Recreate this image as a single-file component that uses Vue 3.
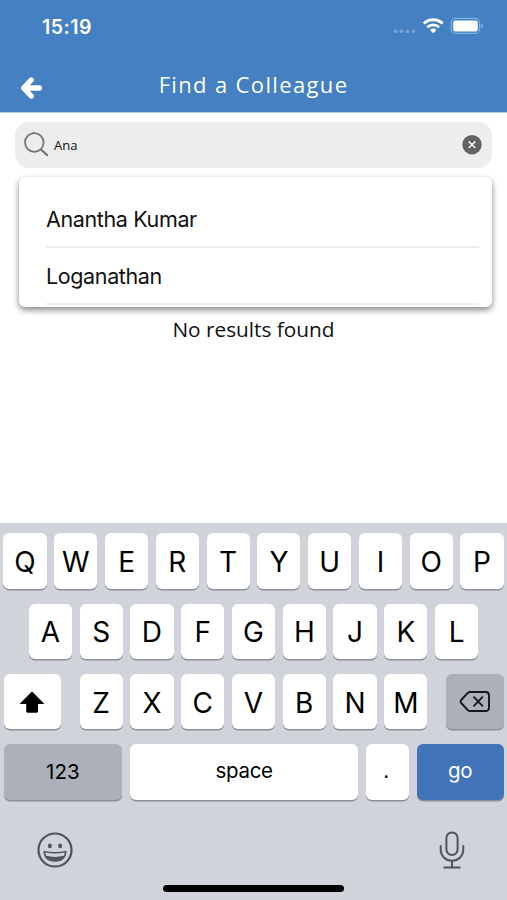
<script setup>
const letterRows = [
  ['Q', 'W', 'E', 'R', 'T', 'Y', 'U', 'I', 'O', 'P'],
  ['A', 'S', 'D', 'F', 'G', 'H', 'J', 'K', 'L'],
]
const lastRow = ['Z', 'X', 'C', 'V', 'B', 'N', 'M']
const suggestions = ['Anantha Kumar', 'Loganathan']
</script>

<template>
  <div class="screen">
    <header class="header">
      <div class="status">
        <span class="time">15:19</span>
        <svg class="status-icons" width="92" height="20" viewBox="0 0 92 20">
          <g fill="#fff" opacity=".26">
            <circle cx="3.500" cy="15.200" r="1.900" />
            <circle cx="9.500" cy="15.200" r="1.900" />
            <circle cx="15.500" cy="15.200" r="1.900" />
            <circle cx="21.500" cy="15.200" r="1.900" />
          </g>
          <g fill="none" stroke="#fff" stroke-width="2.900">
            <path d="M31.800 7.500a13.600 13.600 0 0 1 18.800 0" />
            <path d="M35.300 11.300a8.400 8.400 0 0 1 11.800 0" />
          </g>
          <path d="M38 13.900a4.600 4.600 0 0 1 6.400 0L41.200 17.200z" fill="#fff" />
          <rect x="59.200" y="2.400" width="28.400" height="15" rx="4.500" fill="none" stroke="#7db4df" stroke-width="1.200" />
          <rect x="61.200" y="4.600" width="24.600" height="10.800" rx="2.500" fill="#fff" />
          <path d="M89.300 7.900c2 .6 2 3.800 0 4.400z" fill="#8dbde5" />
        </svg>
      </div>
      <div class="titlebar">
        <svg class="back" width="24" height="24" viewBox="0 0 24 24" fill="none" stroke="#fff" stroke-width="5.400" stroke-linejoin="round" stroke-linecap="round">
          <path d="M12.200 4L4.600 12l7.600 8" />
          <path d="M5.500 12h14.800" />
        </svg>
        <h1 class="title">Find a Colleague</h1>
      </div>
    </header>

    <main class="content">
      <div class="search">
        <svg width="26" height="26" viewBox="0 0 26 26" fill="none" stroke="#707070">
          <circle cx="10.300" cy="10.500" r="9.300" stroke-width="1.700" />
          <path d="M17 17.400l6.800 6.400" stroke-width="2.100" />
        </svg>
        <span class="query">Ana</span>
        <svg width="20" height="20" viewBox="0 0 20 20">
          <circle cx="10" cy="9.700" r="9.700" fill="#626262" />
          <path d="M6.700 6.400l6.600 6.600M13.300 6.400l-6.600 6.600" stroke="#eee" stroke-width="1.700" />
        </svg>
      </div>
      <ul class="suggestions">
        <li v-for="name in suggestions" :key="name"><span>{{ name }}</span></li>
      </ul>
      <p class="empty"><span>No results found</span></p>
    </main>

    <section class="keyboard">
      <div v-for="(row, i) in letterRows" :key="i" class="row">
        <div v-for="k in row" :key="k" class="key">{{ k }}</div>
      </div>
      <div class="row spread">
        <div class="key shift">
          <svg width="26" height="24" viewBox="0 0 26 24">
            <path d="M13 1.500L24.800 13.200q.5.800-.4.800H19v7.300q0 1.400-1.400 1.400H8.600q-1.400 0-1.400-1.400V14H1.600q-.9 0-.4-.8z" fill="#000" />
          </svg>
        </div>
        <div class="group">
          <div v-for="k in lastRow" :key="k" class="key">{{ k }}</div>
        </div>
        <div class="key muted delete">
          <svg width="32" height="24" viewBox="0 0 32 24" fill="none" stroke="#15171c" stroke-linecap="round" stroke-linejoin="round">
            <path d="M11 2h15.500q3.500 0 3.500 3.500v12q0 3.500-3.500 3.500H11q-1.300 0-2.200-.9L2.200 13q-1.200-1.500 0-3L8.800 2.900Q9.700 2 11 2z" stroke-width="1.900" />
            <path d="M15 7.200l8.400 8.600M23.400 7.200L15 15.800" stroke-width="1.900" />
          </svg>
        </div>
      </div>
      <div class="row actions">
        <div class="key word muted numbers">123</div>
        <div class="key word space">space</div>
        <div class="key word dot">.</div>
        <div class="key word go">go</div>
      </div>
      <div class="tools">
        <svg width="36" height="36" viewBox="0 0 36 36">
          <circle cx="18" cy="18" r="16.500" fill="none" stroke="#50535a" stroke-width="2.200" />
          <ellipse cx="12.900" cy="13.900" rx="2" ry="2.400" fill="#50535a" />
          <ellipse cx="23.100" cy="13.900" rx="2" ry="2.400" fill="#50535a" />
          <path d="M6.400 18.800q11.600 2.600 23.200 0-.5 11-11.600 11T6.400 18.800z" fill="#50535a" />
          <path d="M8.200 20.500q9.800 2 19.600 0l-.9 3.300q-8.900 2.200-17.800 0z" fill="#d0d3da" />
        </svg>
        <svg width="26" height="38" viewBox="0 0 26 38" fill="none" stroke="#50535a" stroke-width="2" stroke-linecap="round">
          <rect x="7.400" y="1.400" width="11.200" height="22.600" rx="5.600" />
          <path d="M1.700 15v3c0 7 4.800 11.700 11.300 11.700S24.300 25 24.300 18v-3M13 29.700v6M5.300 36.400h15.400" />
        </svg>
      </div>
      <div class="home"></div>
    </section>
  </div>
</template>

<style>
body {
  margin: 0;
}
</style>

<style scoped>
.screen {
  width: 507px;
  height: 900px;
  display: flex;
  flex-direction: column;
  overflow: hidden;
  background: #fff;
  color: #111;
  font-family: Inter, "Liberation Sans", sans-serif;
}
.header {
  box-sizing: border-box;
  height: 113px;
  background: #4580c2;
  border-bottom: 1px solid #b4cbea;
}
.status {
  display: flex;
  justify-content: space-between;
  padding: 16px 23px 0 42px;
  height: 40px;
  box-sizing: border-box;
}
.time {
  color: #fff;
  font-size: 19.500px;
  font-weight: 600;
  line-height: 22px;
  letter-spacing: 0.500px;
}
.titlebar {
  display: grid;
  grid-template-columns: 40px 1fr 40px;
  align-items: center;
  height: 72px;
}
.back {
  margin: 24px 0 0 19px;
}
.title {
  margin: 15px 0 0;
  text-align: center;
  color: #fff;
  font: 400 22px/30px "Open Sans", sans-serif;
  letter-spacing: 1.350px;
}
.content {
  flex: 1;
  padding: 9px 15px 0;
}
.search {
  display: flex;
  align-items: center;
  box-sizing: border-box;
  height: 46px;
  padding: 0 10px 0 9px;
  border-radius: 14px;
  background: #ededed;
}
.query {
  flex: 1;
  margin-left: 4px;
  font: 400 13px/18px "Open Sans", sans-serif;
}
.suggestions {
  box-sizing: border-box;
  height: 130px;
  margin: 9px 0 0 4px;
  padding: 14px 13px 0 27px;
  list-style: none;
  overflow: hidden;
  border-radius: 6px;
  background: #fff;
  box-shadow: 0 3px 6px rgba(0, 0, 0, 0.48);
}
.suggestions li {
  box-sizing: border-box;
  height: 57px;
  border-bottom: 2px solid #eee;
  font-size: 21.500px;
  line-height: 56px;
  letter-spacing: -0.370px;
}
.empty {
  margin: 7px 0 0;
  text-align: center;
  font: 400 20.800px/30px "Open Sans", sans-serif;
}
.keyboard {
  display: flex;
  flex-direction: column;
  gap: 15px;
  box-sizing: border-box;
  height: 377px;
  padding: 10.400px 3.500px 0;
  background: #d0d3da;
}
.row {
  display: flex;
  justify-content: center;
  gap: 7.600px;
}
.spread {
  justify-content: space-between;
}
.group {
  display: flex;
  gap: 7.600px;
}
.key {
  display: flex;
  align-items: center;
  justify-content: center;
  box-sizing: border-box;
  width: 43.200px;
  height: 55.300px;
  padding-top: 2px;
  flex: none;
  border-radius: 6px;
  background: #fff;
  box-shadow: 0 1.500px 0 #8e9095;
  color: #000;
  font-size: 28px;
}
.muted {
  background: #abb0bb;
}
.shift,
.delete {
  width: 57.500px;
  padding-top: 0;
}
.word {
  padding: 0 0 2px;
  font-size: 20.500px;
  letter-spacing: -0.300px;
}
.numbers {
  width: 118.700px;
  padding: 0;
  letter-spacing: 0;
}
.space {
  flex: 1;
}
.dot {
  padding-right: 3px;
}
.go {
  width: 86.700px;
  background: #4073b8;
  color: #fff;
}
.tools {
  display: flex;
  justify-content: space-between;
  align-items: center;
  margin-top: 16px;
  padding: 0 39px 0 33px;
}
.home {
  width: 181px;
  height: 7px;
  margin: 1px auto 0;
  border-radius: 4px;
  background: #000;
}
</style>
